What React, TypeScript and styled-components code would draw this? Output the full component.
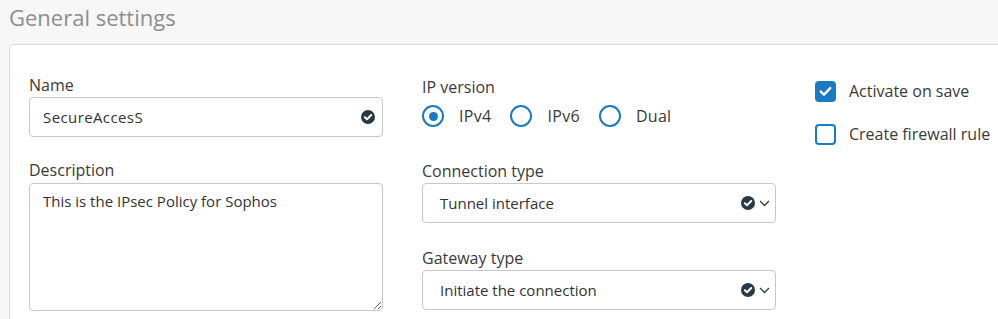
import React from "react";
import styled, { createGlobalStyle } from "styled-components";

const Global = createGlobalStyle`
  html, body { margin: 0; padding: 0; }
  body {
    background: #f7f7f7;
    font-family: "Open Sans", "Liberation Sans", sans-serif;
    overflow: hidden;
    width: 998px;
    height: 319px;
  }
`;

const Page = styled.div`
  padding-left: 9px;
`;

const Title = styled.h2`
  margin: 0;
  height: 44px;
  font-size: 22px;
  font-weight: 400;
  line-height: 34px;
  color: #8e8e8e;
`;

const Panel = styled.section`
  background: #fff;
  border: 1px solid #dcdcdc;
  border-radius: 4px 0 0 0;
  width: 1100px;
  height: 400px;
  box-sizing: border-box;
  padding: 29px 0 0 19px;
  display: grid;
  grid-template-columns: 354px 354px auto;
  column-gap: 39px;
  align-items: start;
`;

const Column = styled.div<{ $top?: number }>`
  display: flex;
  flex-direction: column;
  padding-top: ${(p) => p.$top ?? 0}px;
`;

const Field = styled.div<{ $gap?: number }>`
  display: flex;
  flex-direction: column;
  margin-bottom: ${(p) => p.$gap ?? 22}px;
`;

const Label = styled.label`
  font-size: 16px;
  line-height: 22px;
  color: #3a3a3a;
  margin-bottom: 1px;
`;

const InputBox = styled.div`
  height: 40px;
  box-sizing: border-box;
  border: 1px solid #c8c8c8;
  border-radius: 4px;
  display: flex;
  align-items: center;
  padding: 0 7px 0 13px;
  font-size: 15px;
  color: #333;
  background: #fff;
`;

const SelectBox = styled(InputBox)`
  padding: 0 5px 0 17px;
`;

const Value = styled.span<{ $wide?: boolean }>`
  flex: 1;
  letter-spacing: ${(p) => (p.$wide ? "0.4px" : "0")};
`;

const TextArea = styled.textarea`
  height: 128px;
  box-sizing: border-box;
  margin-top: 1px;
  border: 1px solid #c8c8c8;
  border-radius: 4px;
  padding: 7px 13px;
  font-family: "Open Sans", "Liberation Sans", sans-serif;
  font-size: 15px;
  line-height: 20px;
  color: #333;
  resize: vertical;
  outline: none;
`;

const RadioRow = styled.div`
  display: flex;
  align-items: center;
  margin-top: 6px;
  height: 22px;
  margin-bottom: 33px;
`;

const RadioOption = styled.div`
  display: flex;
  align-items: center;
  margin-right: 19px;
`;

const RadioText = styled.span`
  margin-left: 15px;
  font-size: 16px;
  color: #3a3a3a;
  letter-spacing: 0.3px;
`;

const RadioCircle = styled.span<{ $checked?: boolean }>`
  flex: none;
  width: 22px;
  height: 22px;
  box-sizing: border-box;
  border: 2.5px solid #1b7bc2;
  border-radius: 50%;
  display: flex;
  align-items: center;
  justify-content: center;
  background: #fff;
  &::after {
    content: "";
    width: 9px;
    height: 9px;
    border-radius: 50%;
    background: ${(p) => (p.$checked ? "#1b7bc2" : "transparent")};
  }
`;

const CheckRow = styled.div`
  display: flex;
  align-items: center;
  height: 22px;
  margin-bottom: 21px;
`;

const CheckText = styled.span`
  margin-left: 13px;
  font-size: 16px;
  color: #3a3a3a;
  white-space: nowrap;
`;

const CheckBox = styled.span<{ $checked?: boolean }>`
  flex: none;
  width: 21px;
  height: 21px;
  box-sizing: border-box;
  border: 2px solid #1b7bc2;
  border-radius: 4px;
  background: ${(p) => (p.$checked ? "#1b7bc2" : "#fff")};
  display: flex;
  align-items: center;
  justify-content: center;
`;

const Icons = styled.span`
  display: flex;
  align-items: center;
  gap: 4px;
`;

const CheckCircle = () => (
  <svg width="14" height="14" viewBox="0 0 14 14">
    <circle cx="7" cy="7" r="7" fill="#2a3946" />
    <path d="M3.8 7.2 L6 9.3 L10.2 5" fill="none" stroke="#fff" strokeWidth="2" strokeLinecap="round" strokeLinejoin="round" />
  </svg>
);

const Chevron = () => (
  <svg width="11" height="7" viewBox="0 0 11 7">
    <path d="M1 1 L5.5 5.5 L10 1" fill="none" stroke="#3a3a3a" strokeWidth="1.3" />
  </svg>
);

const Tick = () => (
  <svg width="13" height="11" viewBox="0 0 13 11">
    <path d="M1.8 5.6 L5 8.6 L11.2 2.2" fill="none" stroke="#fff" strokeWidth="2.4" strokeLinecap="round" strokeLinejoin="round" />
  </svg>
);

export default function App() {
  return (
    <>
      <Global />
      <Page>
        <Title>General settings</Title>
        <Panel>
          <Column>
            <Field>
              <Label>Name</Label>
              <InputBox>
                <Value $wide>SecureAccesS</Value>
                <CheckCircle />
              </InputBox>
            </Field>
            <Field>
              <Label>Description</Label>
              <TextArea defaultValue="This is the IPsec Policy for Sophos" />
            </Field>
          </Column>
          <Column $top={2}>
            <Label>IP version</Label>
            <RadioRow>
              <RadioOption>
                <RadioCircle $checked />
                <RadioText>IPv4</RadioText>
              </RadioOption>
              <RadioOption>
                <RadioCircle />
                <RadioText>IPv6</RadioText>
              </RadioOption>
              <RadioOption>
                <RadioCircle />
                <RadioText>Dual</RadioText>
              </RadioOption>
            </RadioRow>
            <Field $gap={24}>
              <Label>Connection type</Label>
              <SelectBox>
                <Value>Tunnel interface</Value>
                <Icons>
                  <CheckCircle />
                  <Chevron />
                </Icons>
              </SelectBox>
            </Field>
            <Field>
              <Label>Gateway type</Label>
              <SelectBox>
                <Value>Initiate the connection</Value>
                <Icons>
                  <CheckCircle />
                  <Chevron />
                </Icons>
              </SelectBox>
            </Field>
          </Column>
          <Column $top={6}>
            <CheckRow>
              <CheckBox $checked>
                <Tick />
              </CheckBox>
              <CheckText>Activate on save</CheckText>
            </CheckRow>
            <CheckRow>
              <CheckBox />
              <CheckText>Create firewall rule</CheckText>
            </CheckRow>
          </Column>
        </Panel>
      </Page>
    </>
  );
}
